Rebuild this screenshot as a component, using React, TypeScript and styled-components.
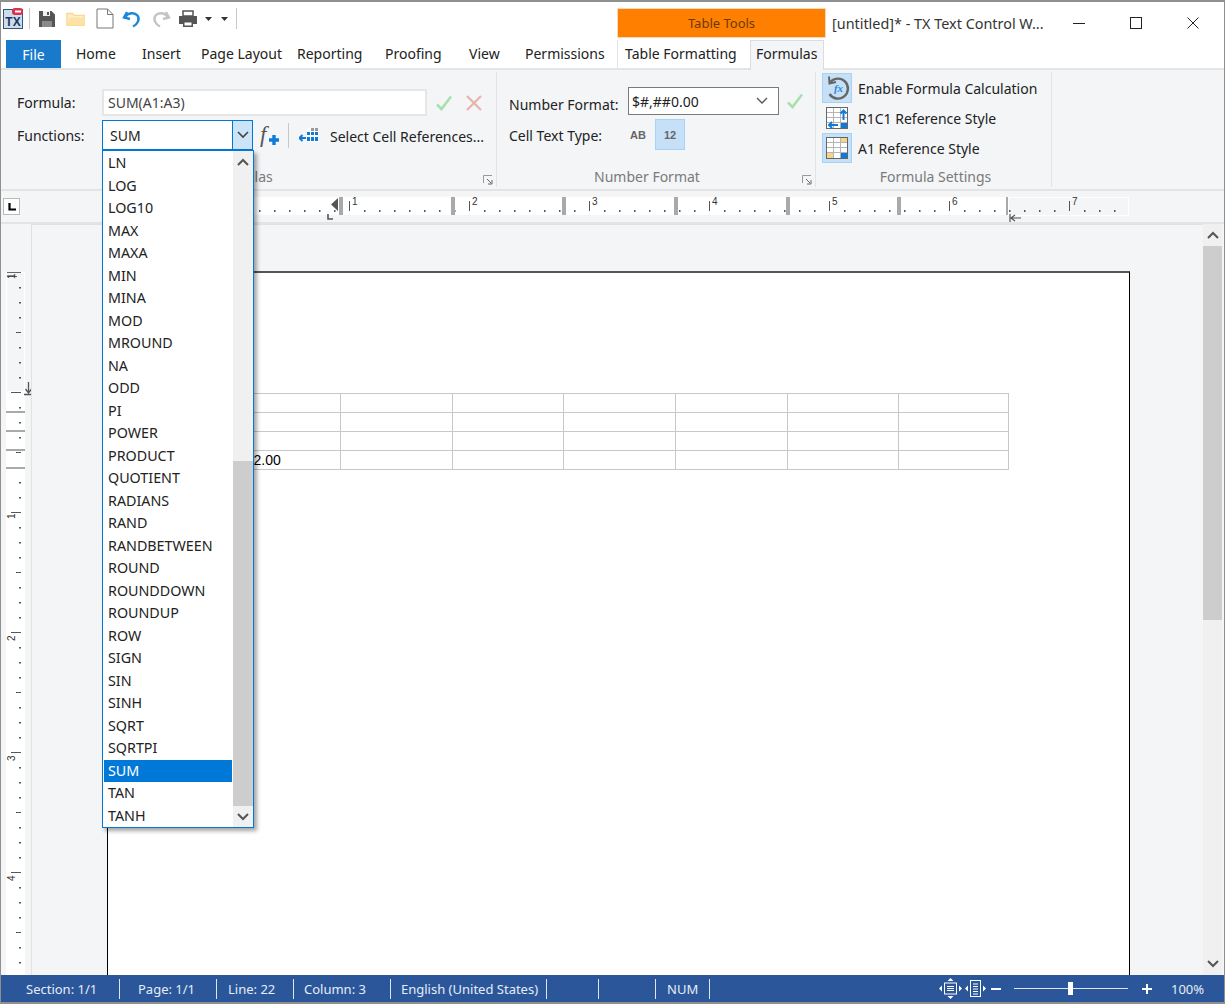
import React from "react";
import styled, { createGlobalStyle } from "styled-components";

const GlobalStyle = createGlobalStyle`
  html, body {
    margin: 0;
    padding: 0;
    background: #fff;
  }
  * {
    box-sizing: border-box;
  }
`;

const uiFont = `"Noto Sans", "Open Sans", sans-serif`;

const functionNames = [
  "LN", "LOG", "LOG10", "MAX", "MAXA", "MIN", "MINA", "MOD", "MROUND", "NA",
  "ODD", "PI", "POWER", "PRODUCT", "QUOTIENT", "RADIANS", "RAND", "RANDBETWEEN",
  "ROUND", "ROUNDDOWN", "ROUNDUP", "ROW", "SIGN", "SIN", "SINH", "SQRT", "SQRTPI",
  "SUM", "TAN", "TANH",
];

const ribbonTabs = [
  { label: "Home", width: 66 },
  { label: "Insert", width: 59 },
  { label: "Page Layout", width: 96 },
  { label: "Reporting", width: 88 },
  { label: "Proofing", width: 84 },
  { label: "View", width: 56 },
  { label: "Permissions", width: 92 },
];

const statusCells = [
  { label: "Section: 1/1", width: 119, pad: 25 },
  { label: "Page: 1/1", width: 97, pad: 18 },
  { label: "Line: 22", width: 77, pad: 11 },
  { label: "Column: 3", width: 97, pad: 10 },
  { label: "English (United States)", width: 156, pad: 10 },
  { label: "", width: 52, pad: 0 },
  { label: "", width: 57, pad: 0 },
  { label: "NUM", width: 54, pad: 11 },
];

const columnWidths = [111, 112, 111, 112, 112, 111, 110];

/* ---------- small drawings ---------- */

const LogoIcon = () => (
  <svg width="20" height="21" viewBox="0 0 20 21">
    <rect x="0.5" y="1.5" width="19" height="19" fill="#cfdcea" stroke="#34567c" />
    <text x="10" y="18" textAnchor="middle" fontFamily="Liberation Sans" fontWeight="700" fontSize="12" fill="#17375e">TX</text>
    <rect x="9" y="0" width="11" height="7" rx="3" fill="#d8324a" />
    <rect x="12" y="2.5" width="6" height="2" fill="#fff" />
  </svg>
);

const SaveIcon = () => (
  <svg width="18" height="18" viewBox="0 0 18 18">
    <path d="M1 1h12.5L17 4.5V17H1z" fill="#555" />
    <rect x="5" y="1" width="7" height="5" fill="#f0f0f0" />
    <rect x="9" y="2" width="2" height="3" fill="#555" />
    <rect x="4" y="11" width="10" height="6" fill="#8a8a8a" />
  </svg>
);

const FolderIcon = () => (
  <svg width="20" height="17" viewBox="0 0 22 18">
    <path d="M1 3.5h6l2 2h11v11H1z" fill="#fdeec9" stroke="#fbd88d" strokeWidth="1.5" />
    <path d="M1 16.5 4 8h17l-1 8.5z" fill="#fde2a6" />
  </svg>
);

const PageIcon = () => (
  <svg width="18" height="21" viewBox="0 0 18 21">
    <path d="M1 1h10.5L17 6.5V20H1z" fill="#fff" stroke="#777" />
    <path d="M11.5 1v5.5H17" fill="none" stroke="#777" />
  </svg>
);

const UndoIcon = ({ color }: { color: string }) => (
  <svg width="20" height="20" viewBox="0 0 20 20">
    <path d="M5 3 2 8.5l6 1.5" fill="none" stroke={color} strokeWidth="2.4" />
    <path d="M3 8C6 3.5 12.5 3 15.500 6.500 18 10 16 15 11 17.500" fill="none" stroke={color} strokeWidth="2.4" />
  </svg>
);

const PrintIcon = () => (
  <svg width="20" height="18" viewBox="0 0 20 18">
    <rect x="5" y="1" width="10" height="5" fill="#fff" stroke="#555" strokeWidth="1.5" />
    <path d="M1 6h18v8h-4v-3H5v3H1z" fill="#555" />
    <rect x="5.750" y="11.750" width="8.500" height="4.500" fill="#fff" stroke="#555" strokeWidth="1.5" />
  </svg>
);

const TinyArrow = () => (
  <svg width="7" height="4" viewBox="0 0 7 4">
    <path d="M0 0h7L3.500 4z" fill="#333" />
  </svg>
);

const CheckIcon = ({ color = "#a6e0ab" }: { color?: string }) => (
  <svg width="16" height="16" viewBox="0 0 16 16">
    <path d="M1 9.500 5.500 14 15 1.500" fill="none" stroke={color} strokeWidth="2.500" />
  </svg>
);

const CrossIcon = () => (
  <svg width="16" height="16" viewBox="0 0 16 16">
    <path d="M1 1l14 14M15 1 1 15" fill="none" stroke="#e6b4ab" strokeWidth="2.200" />
  </svg>
);

const Chevron = ({ up = false, color = "#555", w = 1.6 }: { up?: boolean; color?: string; w?: number }) => (
  <svg width="12" height="8" viewBox="0 0 12 8">
    <path d={up ? "M1 7 6 2l5 5" : "M1 1l5 5 5-5"} fill="none" stroke={color} strokeWidth={w} />
  </svg>
);

const CellRefIcon = () => (
  <svg width="20" height="16" viewBox="0 0 20 16">
    <path d="M8 1h11v14H8z" fill="#fff" />
    <path d="M12 1h3v3h-3zM16 1h3v3h-3z" fill="#9a9a9a" />
    <path d="M8 5h3v3H8zM12 5h3v3h-3zM16 5h3v3h-3zM8 10h3v4H8zM12 10h3v4h-3zM16 10h3v4h-3z" fill="#0f7bd8" />
    <path d="M0 11h7M3.500 8 0.500 11l3 3" fill="none" stroke="#0f7bd8" strokeWidth="2" />
  </svg>
);

const PlusMark = () => (
  <svg width="10" height="10" viewBox="0 0 10 10">
    <path d="M0 5h10M5 0v10" stroke="#0f7bd8" strokeWidth="3.400" />
  </svg>
);

const CalcIcon = () => (
  <svg width="26" height="26" viewBox="0 0 26 26">
    <path d="M6 7.500A10 10 0 1 1 5.500 19" fill="none" stroke="#666" strokeWidth="2.400" />
    <path d="M5 1.500 5.500 8.500 12 7" fill="none" stroke="#666" strokeWidth="2" />
    <text x="14.500" y="17" textAnchor="middle" fontFamily="Liberation Serif" fontStyle="italic" fontWeight="700" fontSize="11" fill="#2e8ad8">fx</text>
  </svg>
);

const GridIcon = ({ variant }: { variant: "r1c1" | "a1" }) => (
  <svg width="22" height="22" viewBox="0 0 22 22">
    <rect x="0.500" y="0.500" width="21" height="21" fill="#fff" stroke="#666" />
    <path d="M1 5.500h20M1 10.500h20M1 15.500h20M7.500 1v20M14.500 1v20" stroke="#b5b5b5" fill="none" />
    {variant === "a1" ? (
      <>
        <rect x="15" y="1" width="6" height="4" fill="#f7d48c" />
        <rect x="1" y="16" width="6" height="5" fill="#f7d48c" />
        <rect x="15" y="16" width="6" height="5" fill="#0f7bd8" />
      </>
    ) : (
      <>
        <rect x="15" y="16" width="6" height="5" fill="#0f7bd8" />
        <path d="M17.500 13V3.500M14.500 6.500l3-3 3 3" fill="none" stroke="#0f7bd8" strokeWidth="2" />
        <path d="M12 18H3M6 15l-3 3 3 3" fill="none" stroke="#0f7bd8" strokeWidth="2" />
      </>
    )}
  </svg>
);

const Launcher = () => (
  <svg width="10" height="10" viewBox="0 0 10 10">
    <path d="M.5 8V.5H9" fill="none" stroke="#999" />
    <path d="M4 4l4 4M9 5v4H5" fill="none" stroke="#666" />
  </svg>
);

/* page coordinates are used for both rulers, it makes the ticks easy to check */
const HorizontalRuler = () => {
  const marks: React.ReactNode[] = [];
  for (let x = 259; x < 1125; x += 15) {
    if ((x - 349) % 120 === 0) {
      marks.push(<rect key={`t${x}`} x={x} y={10} width="1" height="10" fill="#555" />);
      const n = (x - 349) / 120 + 1;
      if (n > 0) {
        marks.push(
          <text key={`n${x}`} x={x + 3} y={14} fontFamily="Liberation Sans" fontSize="10" fill="#333">{n}</text>
        );
      }
    } else {
      marks.push(<rect key={`d${x}`} x={x} y={19} width="1.500" height="2" fill="#555" />);
    }
  }
  return (
    <svg width="1022" height="31" viewBox="108 0 1022 31">
      <rect x="108" y="6" width="900" height="18" fill="#fff" />
      <rect x="1008.500" y="6.500" width="120" height="18" fill="#f4f5f7" stroke="#fff" />
      {marks}
      {[340, 452, 563, 675, 787, 898, 1007].map((x) => (
        <rect key={x} x={x - 1} y={6} width={x === 1007 ? 2 : 4} height="18" fill="#a9a9a9" />
      ))}
      <path d="M338 7v13l-7-6.500z" fill="#555" />
      <path d="M328 23v5h5" fill="none" stroke="#555" strokeWidth="1.600" />
      <path d="M1021 27h-9M1015 24l-4 3 4 3M1010 23v8" fill="none" stroke="#555" strokeWidth="1.200" />
    </svg>
  );
};

const VerticalRuler = () => {
  const marks: React.ReactNode[] = [];
  for (let y = 287; y < 975; y += 15) {
    const fromOrigin = y - 392;
    if (fromOrigin % 120 === 0) {
      marks.push(<rect key={y} x={11} y={y} width="10" height="1" fill="#555" />);
    } else if (fromOrigin % 60 === 0) {
      marks.push(<rect key={y} x={16} y={y} width="5" height="1" fill="#555" />);
    } else {
      marks.push(<rect key={y} x={19} y={y} width="2" height="1.500" fill="#555" />);
    }
  }
  return (
    <svg width="32" height="751" viewBox="0 224 32 751">
      <rect x="6.500" y="272.500" width="18" height="119" fill="#f4f5f7" stroke="#fff" />
      <rect x="6" y="392" width="19" height="583" fill="#fff" />
      {marks}
      <rect x="7" y="272" width="14" height="1" fill="#666" />
      <rect x="8" y="276" width="9" height="1" fill="#666" />
      {[412, 431, 450, 468].map((y) => (
        <rect key={y} x={6} y={y - 1} width="19" height="2" fill="#a9a9a9" />
      ))}
      {[[279, 1], [519, 1], [641, 2], [761, 3], [881, 4]].map(([y, n]) => (
        <text key={y} x={15} y={y} transform={`rotate(-90 15 ${y})`} fontFamily="Liberation Sans" fontSize="10" fill="#333">{n}</text>
      ))}
      <path d="M28.500 382v10M25.500 389l3 4 3-4M24 394.500h9" fill="none" stroke="#555" strokeWidth="1.300" />
    </svg>
  );
};

/* ---------- components ---------- */

const App = () => {
  return (
    <>
      <GlobalStyle />
      <Window>
        <TitleBar>
          <QuickAccess>
            <LogoSlot><LogoIcon /></LogoSlot>
            <ToolbarSep />
            <QuickBtn $w={19}><SaveIcon /></QuickBtn>
            <QuickBtn $w={20} $gap={10}><FolderIcon /></QuickBtn>
            <QuickBtn $w={18} $gap={10}><PageIcon /></QuickBtn>
            <QuickBtn $w={20} $gap={8}><UndoIcon color="#1e88d8" /></QuickBtn>
            <Mirrored $gap={9}><UndoIcon color="#c4c4c4" /></Mirrored>
            <QuickBtn $w={20} $gap={7}><PrintIcon /></QuickBtn>
            <QuickBtn $w={7} $gap={7}><TinyArrow /></QuickBtn>
            <QuickBtn $w={7} $gap={9}><TinyArrow /></QuickBtn>
            <ToolbarSep $gap={8} />
          </QuickAccess>
          <ToolsTab>Table Tools</ToolsTab>
          <WindowTitle>[untitled]* - TX Text Control W...</WindowTitle>
          <WindowButtons>
            <WindowBtn>
              <svg width="12" height="12" viewBox="0 0 12 12"><path d="M0 6.500h12" stroke="#222" /></svg>
            </WindowBtn>
            <WindowBtn>
              <svg width="12" height="12" viewBox="0 0 12 12"><rect x=".5" y=".5" width="11" height="11" fill="none" stroke="#222" /></svg>
            </WindowBtn>
            <WindowBtn>
              <svg width="12" height="12" viewBox="0 0 12 12"><path d="M.5.5l11 11M11.500.5l-11 11" stroke="#222" /></svg>
            </WindowBtn>
          </WindowButtons>
        </TitleBar>

        <TabRow>
          <FileTab>File</FileTab>
          {ribbonTabs.map((t) => (
            <RibbonTab key={t.label} $w={t.width}>{t.label}</RibbonTab>
          ))}
          <ContextTab>Table Formatting</ContextTab>
          <ActiveTab>Formulas</ActiveTab>
        </TabRow>

        <Ribbon>
          <Group $w={496}>
            <GroupBody>
              <FormulaGrid>
                <FieldLabel>Formula:</FieldLabel>
                <FormulaRow>
                  <FormulaInput>SUM(A1:A3)</FormulaInput>
                  <IconSlot $left={9}><CheckIcon /></IconSlot>
                  <IconSlot $left={14}><CrossIcon /></IconSlot>
                </FormulaRow>
                <FieldLabel>Functions:</FieldLabel>
                <FormulaRow>
                  <FunctionsCombo>
                    <ComboText>SUM</ComboText>
                    <ComboButton><Chevron color="#444" /></ComboButton>
                    <FunctionList>
                      <ListItems>
                        {functionNames.map((name) => (
                          <ListItem key={name} $selected={name === "SUM"}>{name}</ListItem>
                        ))}
                      </ListItems>
                      <ListScroll>
                        <ScrollEnd><Chevron up w={2} /></ScrollEnd>
                        <ListTrack><ListThumb /></ListTrack>
                        <ScrollEnd><Chevron w={2} /></ScrollEnd>
                      </ListScroll>
                    </FunctionList>
                  </FunctionsCombo>
                  <FxGlyph>f<FxPlus><PlusMark /></FxPlus></FxGlyph>
                  <ThinSep />
                  <IconSlot $left={10}><CellRefIcon /></IconSlot>
                  <InlineText>Select Cell References...</InlineText>
                </FormulaRow>
              </FormulaGrid>
            </GroupBody>
            <GroupFoot>
              <GroupName $offset={-13}>Formulas</GroupName>
              <LauncherSlot><Launcher /></LauncherSlot>
            </GroupFoot>
          </Group>

          <Group $w={319}>
            <GroupBody>
              <NumberGrid>
                <NumberRow>
                  <NumberLabel $drop={6}>Number Format:</NumberLabel>
                  <NumberCombo>
                    <span>$#,##0.00</span>
                    <Chevron color="#555" w={1.3} />
                  </NumberCombo>
                  <IconSlot $left={8}><CheckIcon /></IconSlot>
                </NumberRow>
                <TypeRow>
                  <NumberLabel $drop={2}>Cell Text Type:</NumberLabel>
                  <TypeButton>AB</TypeButton>
                  <TypeButton $active>12</TypeButton>
                </TypeRow>
              </NumberGrid>
            </GroupBody>
            <GroupFoot>
              <GroupName $offset={-18}>Number Format</GroupName>
              <LauncherSlot><Launcher /></LauncherSlot>
            </GroupFoot>
          </Group>

          <Group $w={236}>
            <GroupBody>
              <SettingsList>
                <SettingRow>
                  <SettingIcon $active><CalcIcon /></SettingIcon>
                  <span>Enable Formula Calculation</span>
                </SettingRow>
                <SettingRow>
                  <SettingIcon><GridIcon variant="r1c1" /></SettingIcon>
                  <span>R1C1 Reference Style</span>
                </SettingRow>
                <SettingRow>
                  <SettingIcon $active><GridIcon variant="a1" /></SettingIcon>
                  <span>A1 Reference Style</span>
                </SettingRow>
              </SettingsList>
            </GroupBody>
            <GroupFoot>
              <GroupName $offset={4}>Formula Settings</GroupName>
            </GroupFoot>
          </Group>
        </Ribbon>

        <RulerBar>
          <TabStopButton>
            <svg width="8" height="8" viewBox="0 0 8 8"><path d="M1.500 0v6.500H8" fill="none" stroke="#000" strokeWidth="2.200" /></svg>
          </TabStopButton>
          <RulerSlot><HorizontalRuler /></RulerSlot>
        </RulerBar>

        <Workspace>
          <Gutter><VerticalRuler /></Gutter>
          <DocArea>
            <Page>
              <DocTable>
                <colgroup>
                  {columnWidths.map((w, i) => (
                    <col key={i} style={{ width: w }} />
                  ))}
                </colgroup>
                <tbody>
                  {[0, 1, 2, 3].map((row) => (
                    <tr key={row}>
                      {columnWidths.map((_, col) => (
                        <DocCell key={col}>{row === 3 && col === 0 ? "$12.00" : ""}</DocCell>
                      ))}
                    </tr>
                  ))}
                </tbody>
              </DocTable>
            </Page>
          </DocArea>
          <PageScroll>
            <PageScrollEnd><Chevron up w={2} /></PageScrollEnd>
            <PageTrack><PageThumb /></PageTrack>
            <PageScrollEnd><Chevron w={2} /></PageScrollEnd>
          </PageScroll>
        </Workspace>

        <StatusBar>
          {statusCells.map((c, i) => (
            <StatusCell key={i} $w={c.width} $pad={c.pad}>{c.label}</StatusCell>
          ))}
          <ZoomTools>
            <svg width="23" height="21" viewBox="0 0 23 21">
              <g fill="#fff">
                <path d="M11.500 0l3 3h-6zM11.500 21l-3-3h6zM0 10.500l3-3v6zM23 10.500l-3 3v-6z" />
              </g>
              <rect x="5.500" y="5" width="12" height="11" fill="none" stroke="#fff" />
              <path d="M8 8.500h7M8 10.500h7M8 12.500h7" stroke="#fff" />
            </svg>
            <ViewIcon>
              <svg width="21" height="17" viewBox="0 0 21 17">
                <path d="M0 8.500l3-3v6zM21 8.500l-3 3v-6z" fill="#fff" />
                <rect x="5.500" y=".5" width="10" height="16" fill="none" stroke="#fff" />
                <path d="M8 4h5M8 6.500h5M8 9h5M8 11.500h5M8 14h5" stroke="#fff" />
              </svg>
            </ViewIcon>
            <ZoomSign $left={5}>
              <svg width="10" height="10" viewBox="0 0 10 10"><path d="M0 5h10" stroke="#fff" strokeWidth="2" /></svg>
            </ZoomSign>
            <ZoomSlider><ZoomThumb /></ZoomSlider>
            <ZoomSign $left={14}>
              <svg width="10" height="10" viewBox="0 0 10 10"><path d="M0 5h10M5 0v10" stroke="#fff" strokeWidth="2" /></svg>
            </ZoomSign>
            <ZoomValue>100%</ZoomValue>
          </ZoomTools>
        </StatusBar>
      </Window>
    </>
  );
};

const Window = styled.div`
  width: 1225px;
  height: 1004px;
  display: flex;
  flex-direction: column;
  overflow: hidden;
  background: #fff;
  border: 1px solid #8f8f8f;
  border-top-width: 2px;
  border-bottom-width: 2px;
  font-family: ${uiFont};
  font-size: 14px;
  color: #222;
`;

const TitleBar = styled.div`
  height: 36px;
  display: flex;
  flex: none;
  align-items: flex-end;
`;

const QuickAccess = styled.div`
  width: 616px;
  flex: none;
  height: 100%;
  display: flex;
  align-items: center;
  padding-left: 2px;
  padding-bottom: 3px;
`;

const LogoSlot = styled.div`
  width: 20px;
  height: 21px;
`;

const ToolbarSep = styled.div<{ $gap?: number }>`
  width: 1px;
  height: 21px;
  background: #c8c8c8;
  margin: 0 7px 0 ${(p) => p.$gap ?? 6}px;
`;

const QuickBtn = styled.div<{ $w: number; $gap?: number }>`
  width: ${(p) => p.$w}px;
  margin-left: ${(p) => p.$gap ?? 0}px;
  display: flex;
  align-items: center;
  justify-content: center;
`;

const Mirrored = styled.div<{ $gap?: number }>`
  width: 20px;
  margin-left: ${(p) => p.$gap ?? 0}px;
  display: flex;
  transform: scaleX(-1);
`;

const ToolsTab = styled.div`
  width: 209px;
  flex: none;
  height: 30px;
  background: #ff8000;
  border: 1px solid #f4d9bb;
  color: #6b3a06;
  font-size: 13px;
  display: flex;
  align-items: center;
  justify-content: center;
`;

const WindowTitle = styled.div`
  width: 218px;
  flex: none;
  margin-left: 6px;
  height: 100%;
  line-height: 43px;
  font-size: 14.4px;
  white-space: nowrap;
  overflow: hidden;
  color: #333;
`;

const WindowButtons = styled.div`
  height: 100%;
  flex: 1;
  display: flex;
`;

const WindowBtn = styled.div`
  width: 57px;
  display: flex;
  align-items: center;
  justify-content: center;
  padding-top: 6px;
`;

const TabRow = styled.div`
  height: 32px;
  flex: none;
  display: flex;
  align-items: flex-end;
  padding-left: 5px;
  border-bottom: 2px solid #e3e4e6;
`;

const FileTab = styled.div`
  width: 55px;
  height: 28px;
  margin-right: 15px;
  background: #1979ca;
  color: #fff;
  display: flex;
  align-items: center;
  justify-content: center;
`;

const RibbonTab = styled.div<{ $w: number }>`
  width: ${(p) => p.$w}px;
  height: 28px;
  line-height: 28px;
  white-space: nowrap;
`;

const ContextTab = styled.div`
  width: 133px;
  height: 28px;
  line-height: 28px;
  padding-left: 7px;
  white-space: nowrap;
  border-left: 1px solid #e3e4e6;
`;

const ActiveTab = styled.div`
  width: 74px;
  height: 30px;
  margin-bottom: -2px;
  line-height: 26px;
  padding-left: 5px;
  background: #f4f5f7;
  border: 1px solid #dcdde0;
  border-bottom: none;
`;

const Ribbon = styled.div`
  height: 121px;
  flex: none;
  display: flex;
  background: #f4f5f7;
  border-bottom: 2px solid #e3e4e6;
`;

const Group = styled.div<{ $w: number }>`
  width: ${(p) => p.$w}px;
  display: flex;
  flex-direction: column;
  margin: 2px 0;
  border-right: 1px solid #e3e4e6;
  position: relative;
`;

const GroupBody = styled.div`
  flex: 1;
  min-height: 0;
`;

const GroupFoot = styled.div`
  height: 22px;
  display: flex;
  align-items: center;
  justify-content: center;
  position: relative;
`;

const GroupName = styled.div<{ $offset: number }>`
  color: #7a7a7a;
  margin-left: ${(p) => p.$offset}px;
`;

const LauncherSlot = styled.div`
  position: absolute;
  right: 3px;
  bottom: 2px;
  width: 10px;
  height: 10px;
  line-height: 0;
`;

const FormulaGrid = styled.div`
  display: grid;
  grid-template-columns: 85px 1fr;
  grid-template-rows: 27px 30px;
  row-gap: 4px;
  padding: 17px 0 0 16px;
  align-items: center;
`;

const FieldLabel = styled.div`
  color: #222;
`;

const FormulaRow = styled.div`
  display: flex;
  align-items: center;
  height: 100%;
`;

const FormulaInput = styled.div`
  width: 325px;
  height: 27px;
  line-height: 23px;
  padding-left: 4px;
  background: #fff;
  border: 2px solid #e6e6e6;
  color: #444;
`;

const IconSlot = styled.div<{ $left: number }>`
  margin-left: ${(p) => p.$left}px;
  display: flex;
  line-height: 0;
`;

const FunctionsCombo = styled.div`
  width: 151px;
  height: 30px;
  display: flex;
  position: relative;
  background: #fff;
  border: 1px solid #0078d7;
`;

const ComboText = styled.div`
  flex: 1;
  line-height: 30px;
  padding-left: 7px;
`;

const ComboButton = styled.div`
  width: 20px;
  background: #cce4f7;
  border-left: 1px solid #0078d7;
  display: flex;
  align-items: center;
  justify-content: center;
`;

const FunctionList = styled.div`
  position: absolute;
  z-index: 5;
  top: 29px;
  left: -1px;
  width: 152px;
  height: 678px;
  display: flex;
  background: #fff;
  border: 1px solid #0078d7;
  box-shadow: 3px 3px 4px rgba(0, 0, 0, 0.35);
`;

const ListItems = styled.div`
  flex: 1;
  padding: 1px 1px 0;
`;

const ListItem = styled.div<{ $selected?: boolean }>`
  height: 22.5px;
  line-height: 22px;
  padding-left: 4px;
  font-size: 14.3px;
  white-space: nowrap;
  color: ${(p) => (p.$selected ? "#fff" : "#222")};
  background: ${(p) => (p.$selected ? "#0078d7" : "transparent")};
`;

const ListScroll = styled.div`
  width: 20px;
  display: flex;
  flex-direction: column;
  background: #f0f0f0;
`;

const ScrollEnd = styled.div`
  height: 21px;
  display: flex;
  align-items: center;
  justify-content: center;
`;

const ListTrack = styled.div`
  flex: 1;
  display: flex;
  flex-direction: column;
  justify-content: flex-end;
`;

const ListThumb = styled.div`
  height: 345px;
  background: #cdcdcd;
`;

const FxGlyph = styled.div`
  position: relative;
  width: 20px;
  margin-left: 7px;
  font-family: "Liberation Serif", serif;
  font-style: italic;
  font-size: 23px;
  line-height: 26px;
  color: #555;
`;

const FxPlus = styled.span`
  position: absolute;
  left: 9px;
  top: 13px;
  line-height: 0;
`;

const ThinSep = styled.div`
  width: 1px;
  height: 25px;
  margin-left: 8px;
  background: #c8c8c8;
`;

const InlineText = styled.div`
  margin-left: 11px;
  padding-top: 2px;
  white-space: nowrap;
`;

const NumberGrid = styled.div`
  display: flex;
  flex-direction: column;
  padding: 15px 0 0 12px;
  gap: 4px;
`;

const NumberRow = styled.div`
  display: flex;
  align-items: center;
  height: 28px;
`;

const TypeRow = styled.div`
  display: flex;
  align-items: center;
  height: 31px;
`;

const NumberLabel = styled.div<{ $drop: number }>`
  width: 119px;
  padding-top: ${(p) => p.$drop}px;
  white-space: nowrap;
`;

const NumberCombo = styled.div`
  width: 151px;
  height: 28px;
  padding: 0 10px 0 3px;
  display: flex;
  align-items: center;
  justify-content: space-between;
  background: #fff;
  border: 1px solid #7a7a7a;
`;

const TypeButton = styled.div<{ $active?: boolean }>`
  width: 30px;
  height: 31px;
  margin-left: ${(p) => (p.$active ? 0 : -5)}px;
  margin-right: ${(p) => (p.$active ? 0 : 2)}px;
  display: flex;
  align-items: center;
  justify-content: center;
  font-family: "Liberation Sans", sans-serif;
  font-weight: 700;
  font-size: 11px;
  color: #666;
  background: ${(p) => (p.$active ? "#c5e0f7" : "transparent")};
  border: 1px solid ${(p) => (p.$active ? "#a6d2f5" : "transparent")};
`;

const SettingsList = styled.div`
  display: flex;
  flex-direction: column;
  padding: 1px 0 0 6px;
`;

const SettingRow = styled.div`
  height: 30px;
  display: flex;
  align-items: center;
  gap: 6px;
  white-space: nowrap;
`;

const SettingIcon = styled.div<{ $active?: boolean }>`
  width: 30px;
  height: 30px;
  display: flex;
  align-items: center;
  justify-content: center;
  background: ${(p) => (p.$active ? "#c5e0f7" : "transparent")};
  border: 1px solid ${(p) => (p.$active ? "#a6d2f5" : "transparent")};
`;

const RulerBar = styled.div`
  height: 33px;
  flex: none;
  display: flex;
  align-items: center;
  background: #f4f5f7;
  border-bottom: 2px solid #e3e4e6;
`;

const TabStopButton = styled.div`
  width: 17px;
  height: 17px;
  margin-left: 2px;
  background: #fff;
  border: 1px solid #bbb;
  display: flex;
  align-items: center;
  justify-content: center;
`;

const RulerSlot = styled.div`
  margin-left: 88px;
  height: 31px;
  line-height: 0;
`;

const Workspace = styled.div`
  flex: 1;
  min-height: 0;
  display: flex;
  background: #f4f5f7;
`;

const Gutter = styled.div`
  width: 31px;
  flex: none;
  line-height: 0;
  margin-left: -1px;
`;

const DocArea = styled.div`
  flex: 1;
  min-width: 0;
  overflow: hidden;
  padding: 46px 0 0 75px;
  border-left: 1px solid #e0e1e3;
  border-top: 1px solid #e0e1e3;
`;

const Page = styled.div`
  width: 1023px;
  height: 900px;
  background: #fff;
  border: 1px solid #000;
  border-top: 2px solid #555;
  padding: 120px 0 0 121px;
`;

const DocTable = styled.table`
  border-collapse: collapse;
  table-layout: fixed;
  width: 779px;
`;

const DocCell = styled.td`
  height: 19px;
  padding: 0 0 0 8px;
  border: 1px solid #c8c8c8;
  font-family: "Liberation Sans", sans-serif;
  font-size: 14px;
  line-height: 17px;
  color: #000;
`;

const PageScroll = styled.div`
  width: 19px;
  flex: none;
  margin-right: 2px;
  display: flex;
  flex-direction: column;
  background: #f0f0f0;
`;

const PageScrollEnd = styled.div`
  height: 22px;
  display: flex;
  align-items: center;
  justify-content: center;
`;

const PageTrack = styled.div`
  flex: 1;
`;

const PageThumb = styled.div`
  height: 374px;
  background: #cdcdcd;
`;

const StatusBar = styled.div`
  height: 27px;
  flex: none;
  display: flex;
  align-items: center;
  background: #2b579a;
  color: #e6ecf5;
  font-size: 13px;
`;

const StatusCell = styled.div<{ $w: number; $pad: number }>`
  width: ${(p) => p.$w}px;
  height: 20px;
  line-height: 20px;
  padding-left: ${(p) => p.$pad}px;
  border-right: 1px solid #dfe6f0;
  white-space: nowrap;
`;

const ZoomTools = styled.div`
  display: flex;
  align-items: center;
  flex: 1;
  padding-left: 229px;
`;

const ViewIcon = styled.div`
  margin-left: 3px;
  display: flex;
`;

const ZoomSign = styled.div<{ $left: number }>`
  margin-left: ${(p) => p.$left}px;
  display: flex;
`;

const ZoomSlider = styled.div`
  width: 114px;
  height: 1px;
  margin-left: 13px;
  background: #dfe6f0;
  position: relative;
`;

const ZoomThumb = styled.div`
  position: absolute;
  left: 54px;
  top: -6px;
  width: 5px;
  height: 13px;
  background: #fff;
`;

const ZoomValue = styled.div`
  margin-left: 19px;
`;

export default App;
